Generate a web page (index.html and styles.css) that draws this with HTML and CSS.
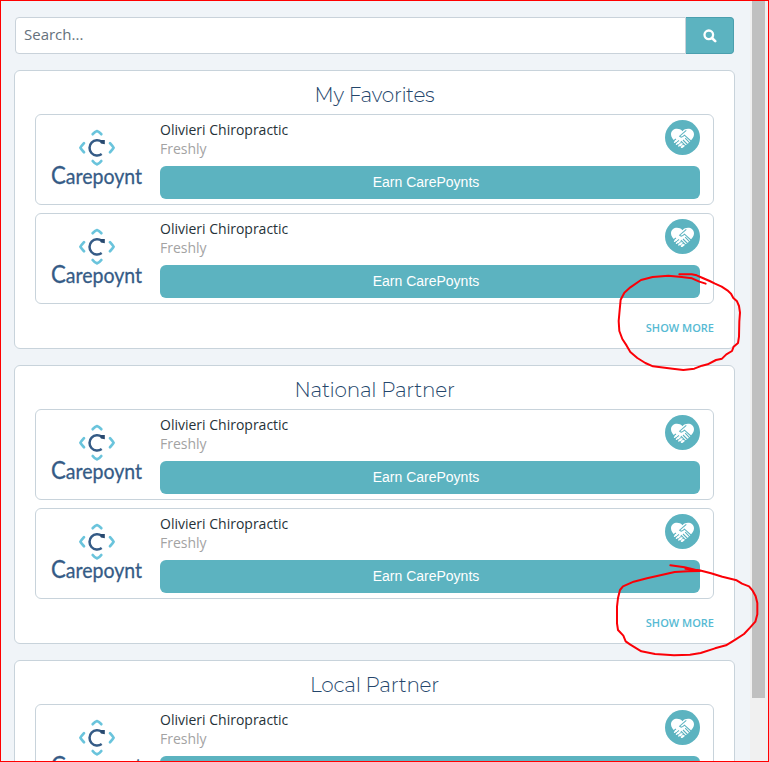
FILE: index.html
```
<!DOCTYPE html>
<html lang="en">
<head>
<meta charset="utf-8">
<title>Partners</title>
<link rel="stylesheet" href="styles.css">
</head>
<body>
<svg class="sprite" aria-hidden="true">
  <symbol id="mark" viewBox="0 0 120 90">
    <g fill="none" stroke="#6ac4dc" stroke-width="2.7" stroke-linecap="round" stroke-linejoin="round">
      <path d="M52.7 19.2Q55 16.5 57 16Q59 16.5 61.3 19.2M52.7 46Q55 49 57 49.4Q59 49 61.3 46M44 28.2Q41 31.5 40.4 32.8Q41 34.2 44 37.3M70 28.2Q73 31.5 73.6 32.8Q73 34.2 70 37.3"/>
    </g>
    <path d="M61.9 27A7.6 7.6 0 1 0 61.7 39" fill="none" stroke="#355b86" stroke-width="2.5"/>
    <path d="M60.2 25h4.6v4.2l-4-.6z" fill="#28496f"/>
  </symbol>
  <symbol id="hands" viewBox="0 0 35 35">
    <circle cx="17.5" cy="17.5" r="17.5" fill="#5cb3c0"/>
    <path d="M17.5 28C13 24.5 6 19 6 14.5C6 8.3 14 7.2 17.5 11.3C21 7.2 29 8.3 29 14.5C29 19 22 24.5 17.5 28Z" fill="#fff"/>
    <path d="M21.3 10.4L14.6 16.2Q16.4 18.4 19.5 15.2L27 22M11 19l-4 3M14 20.5l-4.5 4M16.3 22.5l-4.2 4M18.5 24.2l-3.5 4M18 20l5 5M15.9 21.2l5.5 5.4M20.2 18.2l5 5.1" fill="none" stroke="#5cb3c0" stroke-width="1.1"/>
    <path d="M11.6 20.5l-2 1.8M13.6 22.2l-2.1 2M15.8 24l-2 2M17.8 25.8l-1.3 1.5" stroke="#fff" stroke-width="1.5" stroke-linecap="round"/>
  </symbol>
</svg>

<main class="page">
  <form class="search">
    <input class="search-input" type="text" placeholder="Search..." aria-label="Search">
    <button class="search-button" type="button" aria-label="Search">
      <svg width="14" height="14" viewBox="0 0 14 14"><circle cx="5.8" cy="5.8" r="4.3" fill="none" stroke="#fff" stroke-width="2.3"/><path d="M9 9l3.2 3.2" stroke="#fff" stroke-width="2.6" stroke-linecap="round"/></svg>
    </button>
  </form>

  <section class="panel">
    <h2 class="panel-title">My Favorites</h2>
    <article class="card">
      <svg class="logo" viewBox="0 0 120 90"><use href="#mark"/><text x="11" y="69" textLength="91" lengthAdjust="spacingAndGlyphs"><tspan class="cap">C</tspan>arepoynt</text></svg>
      <div class="card-body">
        <div class="card-head"><div class="names"><div class="name">Olivieri Chiropractic</div><div class="sub">Freshly</div></div><svg class="badge"><use href="#hands"/></svg></div>
        <button class="earn" type="button">Earn CarePoynts</button>
      </div>
    </article>
    <article class="card">
      <svg class="logo" viewBox="0 0 120 90"><use href="#mark"/><text x="11" y="69" textLength="91" lengthAdjust="spacingAndGlyphs"><tspan class="cap">C</tspan>arepoynt</text></svg>
      <div class="card-body">
        <div class="card-head"><div class="names"><div class="name">Olivieri Chiropractic</div><div class="sub">Freshly</div></div><svg class="badge"><use href="#hands"/></svg></div>
        <button class="earn" type="button">Earn CarePoynts</button>
      </div>
    </article>
    <a class="more">SHOW MORE</a>
  </section>

  <section class="panel">
    <h2 class="panel-title">National Partner</h2>
    <article class="card">
      <svg class="logo" viewBox="0 0 120 90"><use href="#mark"/><text x="11" y="69" textLength="91" lengthAdjust="spacingAndGlyphs"><tspan class="cap">C</tspan>arepoynt</text></svg>
      <div class="card-body">
        <div class="card-head"><div class="names"><div class="name">Olivieri Chiropractic</div><div class="sub">Freshly</div></div><svg class="badge"><use href="#hands"/></svg></div>
        <button class="earn" type="button">Earn CarePoynts</button>
      </div>
    </article>
    <article class="card">
      <svg class="logo" viewBox="0 0 120 90"><use href="#mark"/><text x="11" y="69" textLength="91" lengthAdjust="spacingAndGlyphs"><tspan class="cap">C</tspan>arepoynt</text></svg>
      <div class="card-body">
        <div class="card-head"><div class="names"><div class="name">Olivieri Chiropractic</div><div class="sub">Freshly</div></div><svg class="badge"><use href="#hands"/></svg></div>
        <button class="earn" type="button">Earn CarePoynts</button>
      </div>
    </article>
    <a class="more">SHOW MORE</a>
  </section>

  <section class="panel">
    <h2 class="panel-title">Local Partner</h2>
    <article class="card">
      <svg class="logo" viewBox="0 0 120 90"><use href="#mark"/><text x="11" y="69" textLength="91" lengthAdjust="spacingAndGlyphs"><tspan class="cap">C</tspan>arepoynt</text></svg>
      <div class="card-body">
        <div class="card-head"><div class="names"><div class="name">Olivieri Chiropractic</div><div class="sub">Freshly</div></div><svg class="badge"><use href="#hands"/></svg></div>
        <button class="earn" type="button" aria-label="Earn CarePoynts"></button>
      </div>
    </article>
  </section>
</main>
<div class="scrollbar"><div class="thumb"></div></div>

<svg class="notes" viewBox="0 0 769 762" aria-hidden="true">
  <g fill="none" stroke="#fb0007" stroke-width="6" stroke-linecap="round" stroke-linejoin="round">
    <path transform="translate(600 260) scale(.33333)" d="M238 43H275L290 46L308 54L329 63L345 71L365 80L382 91L393 101L400 114L411 124L417 138L420 158L418 184L417 230L414 249L401 260L396 273L379 283L366 296L348 300L323 313L306 317L283 326L250 330L218 326L159 319L136 309L112 294L91 276L80 257L67 237L58 213L56 183L59 150L62 119L73 98L91 82L123 60L158 51L205 47L245 51L276 55L298 65L317 71"/>
    <path transform="translate(600 555) scale(.33333)" d="M211 31L254 37L300 48L264 49L224 51L181 61L141 70L101 80L69 94L60 105L54 129L51 155V205L54 225L70 242L77 259L91 269L124 289L165 297L222 301L270 299L302 294L345 280L378 271L406 254L432 237L450 218L466 200L472 178V144L467 124L458 107L447 94L426 86L410 76L367 65L333 55L298 46L256 41"/>
  </g>
</svg>
</body>
</html>
```
FILE: styles.css
```
* { box-sizing: border-box; }
body {
  margin: 0;
  height: 762px;
  display: flex;
  overflow: hidden;
  position: relative;
  border: 1px solid #f00;
  background: #f0f4f8;
  font-family: "Open Sans", sans-serif;
  font-size: 14px;
}
.sprite { position: absolute; width: 0; height: 0; }
.page { flex: 1; height: 760px; overflow: hidden; padding: 16px 15px 0 13px; }
.search { display: flex; height: 37px; margin: 0 1px 16px; }
.search-input {
  flex: 1;
  border: 1px solid #c9d2da;
  border-radius: 4px 0 0 4px;
  padding: 0 8px 3px;
  background: #fff;
  font: 15px "Open Sans", sans-serif;
}
.search-input::placeholder { color: #65717c; opacity: 1; }
.search-button {
  width: 48px;
  padding: 0;
  display: flex;
  align-items: center;
  justify-content: center;
  border: 1px solid #4a9fae;
  border-left: 0;
  border-radius: 0 4px 4px 0;
  background: #5cb3c0;
}
.panel {
  height: 279px;
  margin-bottom: 16px;
  padding: 11px 20px 0;
  border: 1px solid #c8d3db;
  border-radius: 6px;
  background: #fff;
}
.panel-title {
  margin: 0 0 6px;
  height: 26px;
  line-height: 26px;
  text-align: center;
  font-family: Montserrat, Inter, sans-serif;
  font-size: 20px;
  font-weight: 300;
  letter-spacing: -.25px;
  color: #24466b;
}
.card {
  display: flex;
  height: 91px;
  margin-bottom: 8px;
  border: 1px solid #c8d3db;
  border-radius: 6px;
}
.logo { width: 120px; height: 90px; margin-left: 4px; }
.logo text { font: 400 22px Lato, sans-serif; fill: #355b86; stroke: #355b86; stroke-width: .3px; }
.logo .cap { font-size: 25px; }
.card-body { flex: 1; padding: 5px 13px 0 0; }
.card-head { display: flex; justify-content: space-between; height: 46px; }
.name, .sub { line-height: 19px; }
.name { color: #263238; }
.sub { color: #a3a3a3; }
.badge { width: 35px; height: 35px; }
.earn {
  display: block;
  width: 100%;
  height: 33px;
  padding: 0 8px 2px 0;
  border: 0;
  border-radius: 6px;
  background: #5cb3c0;
  color: #fff;
  font: 14px "Liberation Sans", sans-serif;
}
.more {
  display: block;
  margin-top: 16px;
  text-align: right;
  line-height: 16px;
  font-size: 11px;
  font-weight: 600;
  color: #56bad3;
}
.scrollbar { width: 18px; padding: 0 3px 0 2px; background: #f0f0f0; }
.thumb { height: 697px; background: #c0c0c0; }
.notes { position: absolute; left: -1px; top: -1px; width: 769px; height: 762px; }
```
